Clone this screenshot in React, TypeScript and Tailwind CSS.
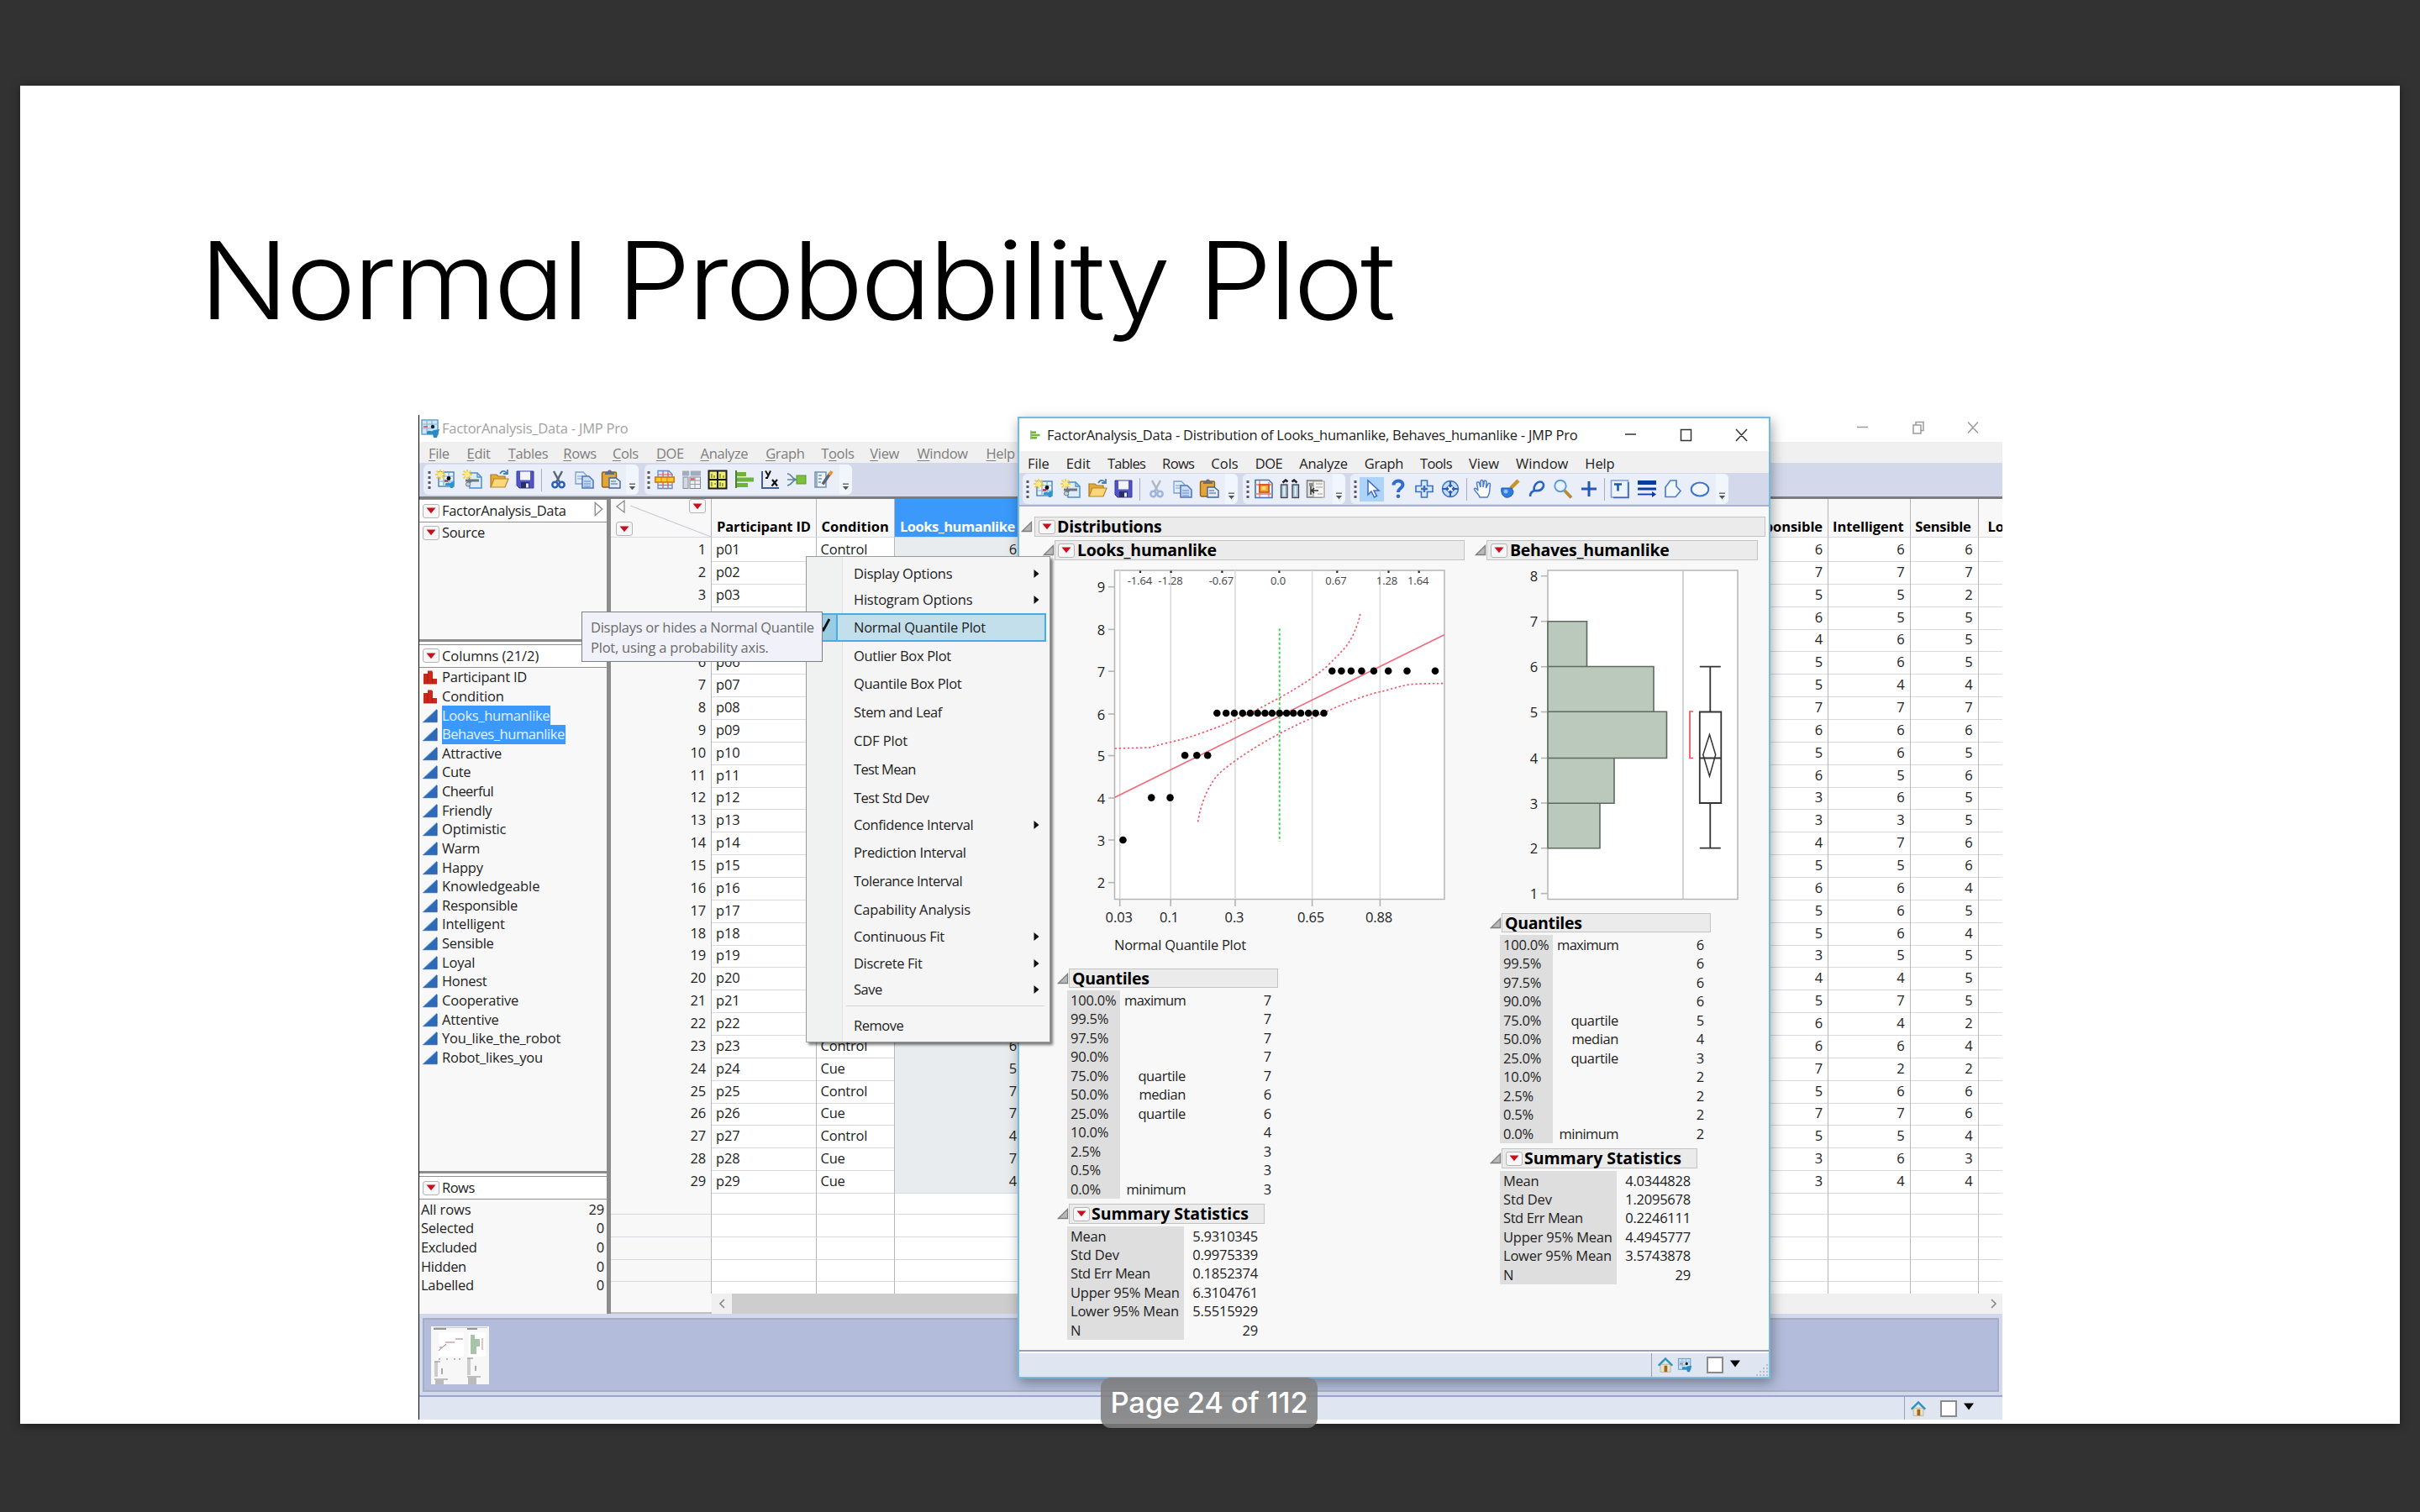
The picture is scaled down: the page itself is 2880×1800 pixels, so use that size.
import React, { useLayoutEffect, useRef, useState } from "react";

/** Text whose tracking is computed so that it spans exactly `w` pixels. */
function Fit({ w, children, className = "" }: { w: number; children: string; className?: string }) {
  const ref = useRef<HTMLSpanElement>(null);
  const [sp, setSp] = useState(0);
  useLayoutEffect(() => {
    const el = ref.current;
    if (!el) return;
    const prev = el.style.letterSpacing;
    el.style.letterSpacing = "0px";
    const natural = el.offsetWidth;
    el.style.letterSpacing = prev;
    setSp((w - natural) / children.length);
  }, [w, children]);
  return (
    <span ref={ref} className={"inline-block whitespace-pre " + className} style={{ letterSpacing: sp + "px" }}>
      {children}
    </span>
  );
}

/* ---------- small marks ---------- */

const RedTri = ({ className = "" }: { className?: string }) => (
  <span className={"flex h-[17px] w-[20px] shrink-0 items-center justify-center rounded-[3px] border-[1.5px] border-[#b4b4b4] bg-[#f7f7f7] " + className}>
    <svg width="12" height="8" viewBox="0 0 12 8"><path d="M0.5 0.5h11L6 7.2z" fill="#c8101c" /></svg>
  </span>
);

const Disclosure = () => (
  <svg className="shrink-0" width="14" height="14" viewBox="0 0 14 14">
    <path d="M1.5 12.5H12.5V1.5z" fill="#b9b9b9" stroke="#7d7d7d" strokeWidth="1.3" />
  </svg>
);

const Ordinal = () => (
  <svg width="18" height="18" viewBox="0 0 18 18">
    <path d="M1 5h5v12H1zM6 1.5h5.5V17H6zM11.500 11H17v6h-5.500z" fill="#d0261a" />
    <path d="M1 17h16M6 5v11M11.500 3v13" stroke="#9a1c12" strokeWidth="0.8" />
  </svg>
);

const Continuous = () => (
  <svg width="18" height="18" viewBox="0 0 18 18">
    <path d="M0.500 16.500L17 1v15.500z" fill="#2d6bb8" />
    <path d="M0.500 16.500L17 1" stroke="#7fb0e4" strokeWidth="1" />
    <path d="M0.500 16.700H17.200V2" stroke="#1f4f8e" strokeWidth="0.8" fill="none" />
  </svg>
);

const Dots = () => (
  <svg className="shrink-0" width="4" height="24" viewBox="0 0 4 24">
    {[2, 8, 14, 20].map((y) => <rect key={y} x="0.500" y={y} width="3" height="3" fill="#55585f" />)}
  </svg>
);

const Overflow = () => (
  <span className="flex w-[15px] shrink-0 items-end justify-center self-stretch rounded-r-md bg-[#f1f6fd] pb-[5px]">
    <svg width="9" height="9" viewBox="0 0 9 9"><path d="M1 1.200h7" stroke="#555" strokeWidth="1.300" /><path d="M0.800 4h7.400L4.500 8.200z" fill="#555" /></svg>
  </span>
);

/* ---------- toolbar drawings ---------- */

const Svg = ({ children, size = 24, className = "" }: { children: React.ReactNode; size?: number; className?: string }) => (
  <svg className={"shrink-0 " + className} width={size} height={size} viewBox="0 0 24 24" fill="none">{children}</svg>
);
const Spark = () => (
  <g>
    <path d="M6 0v12M0 6h12M1.500 1.500l9 9M10.500 1.500l-9 9" stroke="#f2cf4e" strokeWidth="1.800" />
    <circle cx="6" cy="6" r="3" fill="#ffe98a" />
  </g>
);
const NewTable = () => (
  <Svg>
    <rect x="4" y="3" width="18" height="17" fill="#eef6fd" stroke="#4b86c2" strokeWidth="1.500" />
    <path d="M4 8h18M4 14h18M10 3v17M16 3v17" stroke="#78a8d8" strokeWidth="1.200" />
    <path d="M11 12h4v3h-4z" fill="#cf4a58" /><circle cx="16" cy="10.500" r="2.400" fill="#111" />
    <path d="M12 17c2-3 4 1 7-2l4-1-2 8h-3l-1-3-5 0z" fill="#2a96cf" />
    <Spark />
  </Svg>
);
const NewScript = () => (
  <Svg>
    <path d="M8 4h10l5 5v13H9z" fill="#dcecfa" stroke="#4d8fc9" strokeWidth="1.500" />
    <path d="M18 4v5h5" stroke="#4d8fc9" strokeWidth="1.300" />
    <path d="M4 13h16M6 17l5-4" stroke="#6c7780" strokeWidth="3" /><circle cx="7" cy="17.500" r="2.600" fill="#c9d2d8" stroke="#6c7780" />
    <Spark />
  </Svg>
);
const Open = () => (
  <Svg>
    <path d="M2 21V6h7l2 2h8v4" fill="#e3ab3c" stroke="#ad7a1d" strokeWidth="1.200" />
    <path d="M2 21l4-10h17l-4 10z" fill="#fad77b" stroke="#b98524" strokeWidth="1.200" />
    <path d="M13 5c2-4 6-4 8-1M22 0v5h-5" stroke="#4a7fb5" strokeWidth="1.800" />
  </Svg>
);
const Save = () => (
  <Svg>
    <path d="M2 2h20v20H5l-3-3z" fill="#5054c4" stroke="#373a9a" strokeWidth="1" />
    <rect x="6" y="2.500" width="12" height="10" fill="#f3f5fd" /><rect x="7" y="15" width="10" height="7" fill="#2b2d66" />
    <rect x="13" y="16.500" width="3" height="5" fill="#e6e9f8" />
  </Svg>
);
const Cut = ({ faded = false }: { faded?: boolean }) => (
  <Svg className={faded ? "opacity-40" : ""}>
    <path d="M7 2l7 13M17 2l-7 13" stroke="#56677c" strokeWidth="2.500" />
    <circle cx="8.500" cy="18" r="3.200" stroke="#2f5fb5" strokeWidth="2.500" /><circle cx="16.500" cy="18" r="3.200" stroke="#2f5fb5" strokeWidth="2.500" />
  </Svg>
);
const Copy = () => (
  <Svg>
    <path d="M2 3h9l4 4v10H2z" fill="#e2ecfa" stroke="#7c9fd3" strokeWidth="1.300" /><path d="M4 8h7M4 11h7" stroke="#7c9fd3" />
    <path d="M10 8h8l5 5v9H10z" fill="#cadcf6" stroke="#4a74bd" strokeWidth="1.500" /><path d="M12 14h8M12 17h8M12 20h8" stroke="#5e87cb" />
  </Svg>
);
const Paste = () => (
  <Svg>
    <rect x="1.500" y="3" width="17" height="18" rx="1.500" fill="#e2a53a" stroke="#8f6117" strokeWidth="1.400" />
    <path d="M5 6V3h3a2.500 2.500 0 0 1 5 0h3v3z" fill="#6b6d72" />
    <path d="M10 10h8l5 4v8H10z" fill="#dfe9f7" stroke="#48638c" strokeWidth="1.400" /><path d="M12 14h6M12 17h8" stroke="#48638c" />
  </Svg>
);
const Band = () => (
  <Svg>
    <path d="M4 1.500h13l4 4v17H4z" fill="#dce9f8" stroke="#5f8fc6" strokeWidth="1.300" />
    <path d="M4 6h17M4 18.500h17M10 2v20M16 2v20" stroke="#d8575a" strokeWidth="1.200" />
    <rect x="0.800" y="9" width="22.400" height="6" fill="#ffc928" stroke="#d07a12" strokeWidth="1.600" /><path d="M8 9v6M15 9v6" stroke="#d07a12" />
  </Svg>
);
const Tabulate = () => (
  <Svg>
    <rect x="1" y="1.500" width="22" height="6" fill="#a3acba" /><rect x="2" y="9" width="6" height="13.500" fill="#d3d8df" stroke="#858e9b" />
    <rect x="10" y="9" width="12.500" height="13.500" fill="#eef0f3" stroke="#7f8794" /><path d="M10 13h12M10 17.500h12M16 9v13" stroke="#949ca8" />
    <rect x="11" y="10" width="4.500" height="3" fill="#de6e6a" /><path d="M10 0v8" stroke="#eef" strokeWidth="1.500" />
  </Svg>
);
const Quad = () => (
  <Svg>
    <rect x="1.500" y="1.500" width="21" height="21" fill="#f0ee6e" stroke="#1b1b1b" strokeWidth="2" /><path d="M12 1v22M1 12h22" stroke="#1b1b1b" strokeWidth="2" />
    <path d="M5 5v5M8 7v3M15 5v5M19 7v3M5 15v5M8 17h2M15 15v5M18 16v4" stroke="#7e8c2e" strokeWidth="1.500" />
  </Svg>
);
const Bars = ({ size = 24 }: { size?: number }) => (
  <Svg size={size}>
    <path d="M2 1v21" stroke="#4d7d2f" strokeWidth="2" /><path d="M3 3h11v5H3zM3 9.500h20v5H3zM3 16h13v5H3z" fill="#6fb23c" />
  </Svg>
);
const YbyX = () => (
  <Svg>
    <path d="M2 2v20h20" stroke="#3f5f90" strokeWidth="2" />
    <path d="M6 1.500l3 5M12 1.500L8 10H6" stroke="#111" strokeWidth="1.900" /><path d="M14 12l6 7.500M20 12l-6.500 7.500" stroke="#111" strokeWidth="2.200" />
  </Svg>
);
const Fan = () => (
  <Svg>
    <path d="M1 5c5 0 6 7 11 7M1 12h11M1 19c5 0 6-7 11-7" stroke="#5f82a3" strokeWidth="1.600" /><rect x="12" y="7" width="11" height="10" fill="#7bbf3d" stroke="#5a9a28" />
  </Svg>
);
const EditPage = () => (
  <Svg>
    <path d="M2 3h13v18H2z" fill="#eef3f8" stroke="#7292b3" strokeWidth="1.500" /><path d="M6 7h4M6 11h4M6 15h3M4 3v18" stroke="#7292b3" strokeWidth="1.400" />
    <path d="M20 4.500L11 17.500" stroke="#5b6470" strokeWidth="3.600" /><path d="M22 2l-3 4.500" stroke="#e8963a" strokeWidth="4" />
  </Svg>
);
const GridSel = () => (
  <Svg>
    <path d="M2 1.500h16l4 4v17H2z" fill="#eef5fd" stroke="#4272b4" strokeWidth="1.600" /><path d="M2 7h20M2 18h20M7 2v20M18 4v18" stroke="#dd7a7c" strokeWidth="1.300" />
    <rect x="7" y="7" width="11" height="9" fill="#f7a72b" stroke="#cf4f10" strokeWidth="1.600" /><rect x="9.500" y="9" width="5" height="4" fill="#f9d884" />
  </Svg>
);
const Binoc = () => (
  <Svg>
    <path d="M3.500 4.500l3.500-3 2.500 2M14.500 3.500l2.500-2 3.500 3" stroke="#222" strokeWidth="2.400" />
    <rect x="1.500" y="7" width="7.500" height="15.500" fill="#a9c4d2" stroke="#39434a" strokeWidth="1.300" /><rect x="15" y="7" width="7.500" height="15.500" fill="#a9c4d2" stroke="#39434a" strokeWidth="1.300" />
    <path d="M5.200 8.500v12M18.700 8.500v12" stroke="#e4f0f6" strokeWidth="2" />
  </Svg>
);
const Journal = () => (
  <Svg>
    <path d="M1.500 2H19v20H1.500z" fill="#dfe0e0" stroke="#777" strokeWidth="1.400" /><path d="M4 5h5v4H4z" fill="#8c8c8c" />
    <path d="M9 3h13v19H9z" fill="#f6f6f4" stroke="#a29a8a" strokeWidth="1.200" /><path d="M12 6h8M12 10h8M14 18h6" stroke="#b9b9b9" strokeWidth="1.300" /><path d="M6 9v10M6 14h9M10 11l-3 3 3 3" stroke="#333" strokeWidth="1.500" />
  </Svg>
);
const Pointer = () => <Svg><path d="M7 2v17l4-4 3.500 7 3-1.500L14 14h6z" fill="#fff" stroke="#4169c4" strokeWidth="1.500" /></Svg>;
const Question = () => (
  <Svg><path d="M6.500 7.500C6.500 1 17.500 1 17.500 7c0 4.500-5.500 4-5.500 9" stroke="#2d6cd0" strokeWidth="4" /><circle cx="12" cy="20.800" r="2.300" fill="#2d6cd0" /></Svg>
);
const Cross = () => (
  <Svg><path d="M8.500 2h7v6.500H22v7h-6.500V22h-7v-6.500H2v-7h6.500z" fill="#dcebfb" stroke="#3a6fc4" strokeWidth="1.600" /><path d="M12 8v8M8 12h8" stroke="#3a6fc4" strokeWidth="2.500" /></Svg>
);
const Globe = () => (
  <Svg><circle cx="12" cy="12" r="9.500" fill="#c7dcf6" stroke="#3a6fc4" strokeWidth="1.500" /><path d="M12 3v18M3 12h18" stroke="#2f5fb5" strokeWidth="2" /><path d="M12 5l3 4H9zM12 19l3-4H9zM5 12l4-3v6zM19 12l-4-3v6z" fill="#2f5fb5" /><circle cx="12" cy="12" r="2" fill="#fff" /></Svg>
);
const Hand = () => (
  <Svg><path d="M8 22c-1-4-7-8-6.500-10 1-1.500 3 0 4.500 2L4.500 5c.5-2 2.500-1.500 3 0L9 10V3c.5-2 2.500-2 3 0v7l1.500-7c.7-1.500 2.500-1 2.500.7L15.500 11l2.500-5c1-1.300 2.800-.5 2.500 1-1 4 .5 10-3.500 15z" fill="#fff" stroke="#4a7ccc" strokeWidth="1.500" /></Svg>
);
const Brush = () => (
  <Svg><path d="M22 2l-9 9" stroke="#c8932b" strokeWidth="4.500" /><path d="M2 11l12 0 2 4c0 5-5 8-9 7-4-1-6-6-5-11z" fill="#2f7be0" stroke="#1e59b4" /><circle cx="7" cy="15" r="2.500" fill="#8fc0fa" /></Svg>
);
const Lasso = () => (
  <Svg><path d="M9 15C7 8 13 2 18 4c5 3 0 11-6 10-4 0-8 1-8 7" stroke="#2c62c0" strokeWidth="2.600" /></Svg>
);
const Magnifier = () => (
  <Svg><circle cx="9" cy="8.500" r="6.700" fill="#e8f3fd" stroke="#5a9be0" strokeWidth="2" /><path d="M14 14l8 8.500" stroke="#b98a35" strokeWidth="4" /></Svg>
);
const Plus = () => <Svg><path d="M12 3v18M3 12h18" stroke="#2358b8" strokeWidth="3" /></Svg>;
const TextTool = () => (
  <Svg><rect x="1.500" y="2" width="20" height="20" fill="#edf4fd" stroke="#7fa3d6" strokeWidth="1.600" /><path d="M22 4v18.500H4" stroke="#3f66a8" strokeWidth="1.600" /><path d="M5 6.500h9M9.500 6.500v8" stroke="#1f56b0" strokeWidth="2.600" /></Svg>
);
const Lines = () => (
  <Svg><path d="M1 4.500h22" stroke="#0b3b9c" strokeWidth="5" /><path d="M1 12h22" stroke="#0b3b9c" strokeWidth="3" /><path d="M1 18.500h19" stroke="#0b3b9c" strokeWidth="1.800" /><path d="M18 15l5 3.500-5 3.500z" fill="#0b3b9c" /></Svg>
);
const Poly = () => <Svg><path d="M3 21.500V10l6-8h7v7l5 5.500-6 7z" fill="#f2f7fe" stroke="#4a7fd0" strokeWidth="1.700" /></Svg>;
const Oval = () => <Svg><ellipse cx="12" cy="12.500" rx="10.300" ry="8" fill="#f2f7fe" stroke="#3f74cc" strokeWidth="2" /></Svg>;
const House = () => (
  <Svg size={18}><path d="M4 11h16v12H4z" fill="#e9e4d0" stroke="#b2a678" /><path d="M1 13L12 2l11 11" stroke="#2b93c4" strokeWidth="3.200" /><rect x="10" y="13" width="5" height="10" fill="#a7651c" /></Svg>
);
const TableMark = ({ size = 18 }: { size?: number }) => (
  <Svg size={size}>
    <rect x="2" y="2" width="19" height="17" fill="#cfe5f4" stroke="#6ba6cf" strokeWidth="1.600" /><path d="M2 7h19M2 12h12M8 2v17M14 2v10" stroke="#8bb5da" strokeWidth="1.200" />
    <path d="M4 9h5v2H4z" fill="#d26a70" /><circle cx="15" cy="10" r="2.200" fill="#123" /><path d="M8 16c3-3 5 1 8-2l7-1-3 10h-4l-1-4-7 0z" fill="#2b8cc4" />
  </Svg>
);

const Sep = ({ className = "" }: { className?: string }) => <span className={"h-[27px] w-px shrink-0 bg-[#a9afbf] " + className} />;
const FileIcons = ({ faded = false }: { faded?: boolean }) => (
  <>
    <Dots /><span className="w-[5px]" />
    <NewTable /><span className="w-2" /><NewScript /><span className="w-2" /><Open /><span className="w-[7px]" /><Save />
    <Sep className="mx-[7px]" />
    <Cut faded={faded} /><span className="w-[7px]" /><Copy /><span className="w-2" /><Paste />
  </>
);

/* ---------- menus ---------- */

const MENUS: [string, number, number][] = [
  ["File", 0, 25.5], ["Edit", 0, 29], ["Tables", 0, 45.5], ["Rows", 0, 38.5], ["Cols", 0, 32], ["DOE", 0, 32.500],
  ["Analyze", 0, 57.500], ["Graph", 0, 46], ["Tools", 1, 38], ["View", 0, 36], ["Window", 0, 62], ["Help", 0, 35.5],
];

const MenuBar = ({ underline }: { underline: boolean }) => (
  <>
    {MENUS.map(([m, k, w]) => (
      <span key={m} className="flex shrink-0">
        {underline ? (
          <span className="tracking-[-0.35px] whitespace-pre" style={{ width: w }}>
            {m.slice(0, k)}<span className="underline decoration-1 underline-offset-2">{m[k]}</span>{m.slice(k + 1)}
          </span>
        ) : (
          <Fit w={w}>{m}</Fit>
        )}
      </span>
    ))}
  </>
);

/* ---------- data ---------- */

const COLUMNS: [string, number][] = [
  ["Participant ID", 101], ["Condition", 74], ["Looks_humanlike", 128], ["Behaves_humanlike", 146], ["Attractive", 71.500], ["Cute", 34.500],
  ["Cheerful", 61.500], ["Friendly", 59], ["Optimistic", 76], ["Warm", 44.500], ["Happy", 49], ["Knowledgeable", 116], ["Responsible", 90],
  ["Intelligent", 75], ["Sensible", 61.500], ["Loyal", 39], ["Honest", 53], ["Cooperative", 91], ["Attentive", 67.500], ["You_like_the_robot", 141], ["Robot_likes_you", 120],
];

const CONDITION: Record<number, string> = { 1: "Control", 23: "Control", 24: "Cue", 25: "Control", 26: "Cue", 27: "Control", 28: "Cue", 29: "Cue" };
const LOOKS: Record<number, number> = { 1: 6, 23: 6, 24: 5, 25: 7, 26: 7, 27: 4, 28: 7, 29: 4 };
const RATINGS = "666 777 552 655 465 565 544 777 666 565 656 365 335 476 556 664 565 564 355 445 575 642 664 722 566 776 554 363 344".split(" ");

const GRID = "grid grid-cols-[120px_124.5px_93.5px_148px_867px_96px_97.5px_81px_29px]";
const CELL = "border-b-[1.5px] border-r-[1.5px] border-b-[#d9d9e4] border-r-[#b5b5ba]";

const SideHeader = ({ label, w, arrow = false }: { label: string; w: number; arrow?: boolean }) => (
  <div className="flex h-[28px] shrink-0 items-center border-y-[1.5px] border-[#909090] bg-white pl-1">
    <RedTri /><Fit w={w} className="ml-[3px]">{label}</Fit>
    {arrow && <svg className="mr-1 ml-auto -mt-1" width="11" height="18" viewBox="0 0 11 18"><path d="M1.200 1.500v15L9.800 9z" fill="#fff" stroke="#888" strokeWidth="1.300" /></svg>}
  </div>
);

const Thumb = () => (
  <svg className="mt-2 ml-[8px]" width="69" height="69" viewBox="0 0 69 69">
    <rect width="69" height="69" fill="#f7f7f7" /><path d="M3 3h15M43 3h12" stroke="#777" strokeWidth="1.300" /><path d="M3 1.500h64" stroke="#ccc" />
    <rect x="9" y="7" width="30" height="29" fill="#fff" /><rect x="45" y="7" width="20" height="29" fill="#fff" />
    <path d="M9 29l9-8M17 19h11M29 15h9M10 25l3 0" stroke="#a8767c" strokeWidth="1" /><path d="M47 10h5v5h6v9h-4v9h-7z" fill="#a9c3a9" /><path d="M61 14v14" stroke="#b88" />
    <path d="M9 39h2M18 39h2M27 39h2M33 39h2" stroke="#777" />
    <rect x="4" y="42" width="4" height="18" fill="#ccc" /><rect x="43" y="38" width="4" height="20" fill="#ccc" /><path d="M4 42h7M43 38h7M4 63h16M43 60h16" stroke="#888" strokeWidth="1.200" />
    <path d="M13 50v7M53 47v6" stroke="#aaa" strokeWidth="2" /><rect x="5" y="64" width="10" height="5" fill="#bbb" /><rect x="44" y="61" width="10" height="8" fill="#bbb" />
  </svg>
);

const StatusTools = ({ table = false }: { table?: boolean }) => (
  <>
    <span className="h-full w-[1.5px] bg-[#9aa0b2]" />
    <span className="ml-[7px] flex"><House /></span>
    {table && <span className="ml-[5px] flex"><TableMark /></span>}
    <span className="ml-[17px] h-[20px] w-[20px] border-2 border-[#8b8b8b] bg-white" />
    <svg className="ml-2 mb-1" width="12" height="9" viewBox="0 0 12 9"><path d="M0 0.500h12L6 8.500z" fill="#000" /></svg>
  </>
);

/* ---------- data-table window ---------- */

function DataWindow() {
  return (
    <div className="absolute top-[494px] left-[498px] flex h-[1196px] w-[1885px] flex-col overflow-hidden border-l border-black bg-white">
      <div className="flex h-[32px] shrink-0 items-center pl-px">
        <TableMark size={24} />
        <Fit w={222} className="ml-[2px] text-[#a2a2a2]">FactorAnalysis_Data - JMP Pro</Fit>
        <svg className="mr-[25px] ml-auto" width="150" height="18" viewBox="0 0 150 18" fill="none" stroke="#9b9b9b" strokeWidth="1.500">
          <path d="M2 7.500h13M69 5h9v10h-9zM72 5V1.500h9V11.500h-3M134 1.500l12 13M146 1.500l-12 13" />
        </svg>
      </div>
      <div className="flex h-[25px] shrink-0 items-center gap-[20.100px] bg-[#f0f0f0] pt-[3px] pl-[11px] text-[#7e7e7e]"><MenuBar underline /></div>
      <div className="flex h-[40px] shrink-0 gap-[7px] bg-[#d3d9eb] pt-[2px] pb-[2px] pl-[5px]">
        <div className="flex w-[256px] items-center rounded-md bg-[#eaeef9] pl-[5px]"><FileIcons /><span className="ml-auto flex self-stretch"><Overflow /></span></div>
        <div className="flex w-[247px] items-center rounded-md bg-[#eaeef9] pl-[3px]">
          <Dots /><span className="w-[5px]" /><Band /><span className="w-2" /><Tabulate /><span className="w-[7px]" /><Quad /><span className="w-2" /><Bars /><span className="w-[7px]" /><YbyX /><span className="w-[7px]" /><Fan /><span className="w-2" /><EditPage />
          <span className="ml-auto flex self-stretch"><Overflow /></span>
        </div>
      </div>
      <div className="h-[3px] shrink-0 bg-[#7c7c7c]" />
      <div className="flex h-[970px] shrink-0">
        <div className="flex w-[223px] shrink-0 flex-col bg-[#f8f8f8]">
          <SideHeader label="FactorAnalysis_Data" w={148} arrow />
          <div className="flex items-center pt-[1px] pl-1"><RedTri /><Fit w={51} className="ml-[3px]">Source</Fit></div>
          <div className="mt-auto h-[3px] shrink-0 bg-[#8c8c8c]" />
          <div className="h-[3px] shrink-0 bg-white" />
          <SideHeader label="Columns (21/2)" w={115} />
          <ul className="flex h-[599.500px] shrink-0 flex-col pt-[0.500px]">
            {COLUMNS.map(([c, w], i) => (
              <li key={c} className="flex h-[22.630px] shrink-0 items-center pl-1">
                {i < 2 ? <Ordinal /> : <Continuous />}
                <span className={i === 2 || i === 3 ? "ml-[5px] flex h-full items-center bg-[#3b99fc] pr-px text-[#e6f2ff]" : "ml-[5px] flex items-center"}><Fit w={w}>{c}</Fit></span>
              </li>
            ))}
          </ul>
          <div className="h-[3px] shrink-0 bg-[#8c8c8c]" />
          <div className="h-[3px] shrink-0 bg-white" />
          <SideHeader label="Rows" w={39} />
          <div className="h-[136px] shrink-0 pt-[0.500px] pr-[3px] pl-[2px]">
            {([["All rows", 59, "29"], ["Selected", 63, "0"], ["Excluded", 66, "0"], ["Hidden", 54, "0"], ["Labelled", 63, "0"]] as [string, number, string][]).map(([a, w, b]) => (
              <div key={a} className="flex h-[22.600px] items-center justify-between"><Fit w={w}>{a}</Fit><span>{b}</span></div>
            ))}
          </div>
        </div>
        <div className="w-[5px] shrink-0 bg-[#8c8c8c]" />
        <div className="flex grow flex-col">
          <div className={GRID + " h-[46px] shrink-0 bg-[#f8f8f8] font-bold text-black"}>
            <div className={CELL + " flex flex-col justify-between border-b-[#b5b5b5] pb-px pl-[6px]"}>
              <div className="flex items-start justify-between pr-[6px]">
                <svg width="86" height="40" viewBox="0 0 86 40" className="-mb-6 shrink-0 overflow-visible"><path d="M10 2v14L1 9z" fill="#fff" stroke="#8a8a8a" strokeWidth="1.300" /><path d="M17 8l96 37" stroke="#cbcbd6" strokeWidth="1.300" /></svg>
                <RedTri />
              </div>
              <RedTri />
            </div>
            <div className={CELL + " flex items-end pb-[1px] pl-[6px]"}><Fit w={112}>Participant ID</Fit></div>
            <div className={CELL + " flex items-end pb-[1px] pl-[6px]"}><Fit w={80}>Condition</Fit></div>
            <div className={CELL + " flex items-end bg-[#3b99fc] pb-[1px] pl-[6px] text-white"}><Fit w={137}>Looks_humanlike</Fit></div>
            <div className={CELL} />
            <div className={CELL + " flex items-end justify-end pr-[6px] pb-[1px]"}><Fit w={98}>Responsible</Fit></div>
            <div className={CELL + " flex items-end justify-end pr-[7px] pb-[1px]"}><Fit w={84}>Intelligent</Fit></div>
            <div className={CELL + " flex items-end justify-end pr-[8px] pb-[1px]"}><Fit w={66}>Sensible</Fit></div>
            <div className={CELL + " flex items-end overflow-hidden border-r-0 pb-[1px] pl-[11px]"}><Fit w={44}>Loyal</Fit></div>
          </div>
          <div className="h-[900px] shrink-0 overflow-hidden">
            {Array.from({ length: 34 }, (_, i) => i + 1).map((n) => {
              const r = n < 30 ? RATINGS[n - 1] : "   ";
              return (
                <div key={n} className={GRID + " h-[26.870px] leading-[28px]"}>
                  <div className={CELL + " border-b-2 border-b-[#bdbdbd] bg-[#f8f8f8] pr-[6px] text-right"}>{n < 30 ? n : ""}</div>
                  <div className={CELL + " pl-[5px]"}>{n < 30 ? "p" + String(n).padStart(2, "0") : ""}</div>
                  <div className={CELL + " pl-[5px]"}>{CONDITION[n] ?? ""}</div>
                  <div className={CELL + (n < 30 ? " bg-[#e8ecef] pr-[2px] text-right" : "")}>{LOOKS[n] ?? ""}</div>
                  <div className={CELL} />
                  <div className={CELL + " pr-[6px] text-right"}>{r[0]}</div>
                  <div className={CELL + " pr-[6px] text-right"}>{r[1]}</div>
                  <div className={CELL + " pr-[6px] text-right"}>{r[2]}</div>
                  <div className={CELL + " border-r-0"} />
                </div>
              );
            })}
          </div>
          <div className="flex h-[24px] shrink-0">
            <div className="w-[120px] border-b-2 border-[#c0c0c0] bg-[#f8f8f8]" />
            <div className="flex grow items-center bg-[#f0f0f0]">
              <svg className="mx-[8px]" width="8" height="12" viewBox="0 0 8 12" fill="none" stroke="#888" strokeWidth="1.700"><path d="M7 1L2 6l5 5" /></svg>
              <div className="h-full w-[900px] bg-[#cdcdcd]" />
              <svg className="mr-[7px] ml-auto" width="8" height="12" viewBox="0 0 8 12" fill="none" stroke="#888" strokeWidth="1.700"><path d="M1 1l5 5-5 5" /></svg>
            </div>
          </div>
        </div>
      </div>
      <div className="h-[97px] shrink-0 bg-[#d3d9ec] px-1 pt-[5px] pb-[4px]">
        <div className="h-full border-2 border-[#a7adc2] bg-[#b3bddb]"><Thumb /></div>
      </div>
      <div className="flex grow items-center justify-end border-t-2 border-[#9aa4cc] bg-[#dfe6f1] pr-[34px]"><StatusTools /></div>
    </div>
  );
}

/* ---------- charts ---------- */

const Y1: [number, number][] = [[9, 698.7], [8, 749.3], [7, 799.2], [6, 850], [5, 899.600], [4, 950], [3, 1000], [2, 1050.700]];
const POINTS: [number, number[]][] = [
  [1000, [374]], [949.600, [474, 540]], [899.300, [592, 634, 672]],
  [849, [705, 737, 766, 795, 822, 848, 874, 899, 925, 950, 974, 1000, 1027, 1052, 1081]],
  [798.800, [1110, 1143, 1177, 1214, 1257, 1308, 1374, 1473]],
];

const QuantilePlot = () => (
  <svg className="block" width="502" height="473" viewBox="1241 667 502 473" fontSize="16.500" fill="#222" letterSpacing="-0.1">
    <rect x="1326.500" y="679" width="392.500" height="391.500" fill="#fff" stroke="#b5b5b5" strokeWidth="1.500" />
    {[1332.700, 1393.200, 1470, 1561.600, 1642.400].map((x) => <path key={x} d={`M${x} 679V1070`} stroke="#dadada" strokeWidth="1.600" />)}
    {[1332.700, 1393.200, 1470, 1561.600, 1642.400].map((x) => <path key={x} d={`M${x} 1071v8`} stroke="#b5b5b5" strokeWidth="1.600" />)}
    {Y1.map(([n, y]) => <g key={n}><path d={`M1319 ${y}h7.500`} stroke="#b5b5b5" strokeWidth="1.600" /><text x="1315" y={y + 6.500} textAnchor="end">{n}</text></g>)}
    {([[1357, "-1.64", 1356.400], [1393.600, "-1.28", 1393], [1454.400, "-0.67", 1453.400], [1522.400, "0.0", 1521], [1591.300, "0.67", 1590], [1652.500, "1.28", 1650.500], [1688.700, "1.64", 1687.700]] as [number, string, number][]).map(([x, t, c]) => (
      <g key={t}><path d={`M${x} 679.500v2.500`} stroke="#222" strokeWidth="2.200" /><text x={c} y="696" fontSize="13" letterSpacing="-0.1" fill="#444" textAnchor="middle">{t}</text></g>
    ))}
    {([["0.03", 1331.700], ["0.1", 1391.500], ["0.3", 1469], ["0.65", 1560], ["0.88", 1641]] as [string, number][]).map(([t, x]) => <text key={t} x={x} y="1097.500" textAnchor="middle">{t}</text>)}
    <g transform="translate(1210 640) scale(0.33807 0.33333)" fill="none" stroke="#f3697a" strokeWidth="5">
      <path d="M345 928L1505 347" />
      <g stroke="#f1505f" strokeDasharray="7 8" strokeWidth="4.800">
        <path d="M345 753L465 750C480 748 500 740 530 733C600 718 660 695 720 672C800 638 860 608 925 572C1000 530 1050 497 1095 457C1140 410 1165 390 1185 345C1200 310 1207 290 1210 265" />
        <path d="M638 1015C645 970 660 920 685 880C700 850 730 825 765 800C820 760 870 730 925 700C990 665 1050 640 1110 612C1160 590 1210 570 1260 555C1310 545 1340 532 1385 524C1420 522 1460 521 1500 521" />
      </g>
      <path d="M925 325V1085" stroke="#4bcf5a" strokeWidth="6" strokeDasharray="8.500 8" />
    </g>
    {POINTS.map(([y, xs]) => xs.map((x) => <circle key={x} cx={1210 + x / 2.958} cy={y} r="4.300" fill="#000" />))}
    <text x="1326" y="1131" textLength="157" lengthAdjust="spacing">Normal Quantile Plot</text>
  </svg>
);

const Histogram = () => (
  <svg className="block" width="340" height="405" viewBox="1755 667 340 405" fontSize="16.500" fill="#222">
    <rect x="1842" y="679" width="226" height="391.500" fill="#fff" stroke="#b5b5b5" strokeWidth="1.500" />
    <path d="M2003 679v391" stroke="#c4c4c4" strokeWidth="1.500" />
    {([[8, 685.700], [7, 739.700], [6, 793.700], [5, 847.500], [4, 902.500], [3, 956], [2, 1009.700], [1, 1063.700]] as [number, number][]).map(([n, y]) => (
      <g key={n}><path d={`M1834 ${y}h7.500`} stroke="#b5b5b5" strokeWidth="1.600" /><text x="1830" y={y + 6.500} textAnchor="end">{n}</text></g>
    ))}
    <g fill="#bac9bb" stroke="#5d6b5e" strokeWidth="1.600">
      <path d="M1842 739.700h46.500v53.800h-46.500zM1842 793.500h126v53.800h-126zM1842 847.300h141.500v55.200h-141.500zM1842 902.500h79v53.800h-79zM1842 956.300h62v53.400h-62z" />
    </g>
    <path d="M2015 847h-4v55.500h4" fill="none" stroke="#f0505e" strokeWidth="1.700" />
    <g fill="none" stroke="#333" strokeWidth="1.800">
      <path d="M2022.800 793.700h25M2035.300 793.700v53.500M2022.800 847.500h25.500v108.500h-25.500zM2022.800 902.500h25.500M2035.300 956v53.700M2022.800 1009.700h25" />
      <path d="M2034.500 874.500l7.200 24-7.200 25.500-7.700-25.500z" strokeWidth="1.500" />
    </g>
  </svg>
);

/* ---------- report tables ---------- */

const HEAD = "flex items-center border-[1.5px] border-[#c3c3c3] bg-[#ebebeb] font-bold text-[19.500px] text-black";
const QLABELS: [string, string, number][] = [["100.0%", "maximum", 73], ["99.5%", "", 0], ["97.5%", "", 0], ["90.0%", "", 0], ["75.0%", "quartile", 57], ["50.0%", "median", 55.500], ["25.0%", "quartile", 57], ["10.0%", "", 0], ["2.5%", "", 0], ["0.5%", "", 0], ["0.0%", "minimum", 70]];
const SLABELS: [string, number][] = [["Mean", 42], ["Std Dev", 58], ["Std Err Mean", 95], ["Upper 95% Mean", 130], ["Lower 95% Mean", 129], ["N", 13]];

const Stats = ({ q, s }: { q: string; s: string[] }) => (
  <div className="flex flex-col">
    <div className="flex items-center"><Disclosure /><div className={HEAD + " h-[23px] w-[249px] pl-[3px]"}><Fit w={92}>Quantiles</Fit></div></div>
    <div className="mt-[3.500px] ml-[12px]">
      {QLABELS.map(([a, b, w], i) => (
        <div key={a} className="flex h-[22.500px] items-center">
          <span className="flex h-[23px] w-[63px] items-center bg-[#dedede] pl-1">{a}</span>
          <span className="flex w-[78px] justify-end">{b && <Fit w={w}>{b}</Fit>}</span>
          <span className="w-[102px] text-right">{q[i]}</span>
        </div>
      ))}
    </div>
    <div className="mt-[6px] flex items-center"><Disclosure /><div className={HEAD + " h-[24px] w-[233px] pl-[4px]"}><RedTri /><Fit w={187} className="ml-[2px]">Summary Statistics</Fit></div></div>
    <div className="mt-[3.500px] ml-[12px]">
      {SLABELS.map(([a, w], i) => (
        <div key={a} className="flex h-[22.400px] items-center">
          <span className="flex h-[23px] w-[139px] items-center bg-[#dedede] pl-1"><Fit w={w}>{a}</Fit></span>
          <span className="flex w-[88px] justify-end">{i < 5 ? <Fit w={78}>{s[i]}</Fit> : s[i]}</span>
        </div>
      ))}
    </div>
  </div>
);

function ReportWindow() {
  return (
    <div className="absolute top-[496px] left-[1211px] flex h-[1145px] w-[896px] flex-col border-2 border-[#74bbe2] bg-[#f8f8f8] shadow-[2px_5px_14px_rgba(0,0,0,0.35)]">
      <div className="flex h-[39px] shrink-0 items-center bg-white pl-[13px] text-[#222]">
        <Bars size={12} />
        <Fit w={631} className="ml-[8px]">FactorAnalysis_Data - Distribution of Looks_humanlike, Behaves_humanlike - JMP Pro</Fit>
        <svg className="mr-[24px] ml-auto" width="148" height="18" viewBox="0 0 148 18" fill="none" stroke="#333" strokeWidth="1.500"><path d="M1 8h13M67.500 2.500h12v13h-12zM133 2l13 14M146 2l-13 14" /></svg>
      </div>
      <div className="flex h-[26px] shrink-0 items-center gap-[20px] bg-[#f0f0f0] pt-1 pl-[10px] text-[#222]"><MenuBar underline={false} /></div>
      <div className="flex h-[40px] shrink-0 gap-[6px] border-b-2 border-[#a9b1d8] bg-[#d3d9eb] py-[1px] pl-[4px]">
        <div className="flex w-[256px] items-center rounded-md bg-[#eaeef9] pl-[4px]"><FileIcons faded /><span className="ml-auto flex self-stretch"><Overflow /></span></div>
        <div className="flex w-[122px] items-center rounded-md bg-[#eaeef9] pl-[4px]">
          <Dots /><span className="w-[5px]" /><GridSel /><span className="w-[7px]" /><Binoc /><span className="w-[7px]" /><Journal /><span className="ml-auto flex self-stretch"><Overflow /></span>
        </div>
        <div className="flex w-[450px] items-center rounded-md bg-[#eaeef9] pl-[4px]">
          <Dots /><span className="ml-[3px] flex h-[29px] w-[29px] items-center justify-center bg-[#acd3f8]"><Pointer /></span>
          <span className="w-[5px]" /><Question /><span className="w-[7px]" /><Cross /><span className="w-[7px]" /><Globe />
          <Sep className="mx-[7px]" /><Hand /><span className="w-2" /><Brush /><span className="w-2" /><Lasso /><span className="w-[7px]" /><Magnifier /><span className="w-[7px]" /><Plus />
          <Sep className="mx-[6px]" /><TextTool /><span className="w-2" /><Lines /><span className="w-[7px]" /><Poly /><span className="w-2" /><Oval />
          <span className="ml-auto flex self-stretch"><Overflow /></span>
        </div>
      </div>
      <div className="flex h-[1006px] shrink-0 flex-col border-b-2 border-[#9c9fb8] pt-[12px]">
        <div className="flex items-center gap-[2px] pl-[2px]"><Disclosure /><div className={HEAD + " h-[24px] w-[870px] pl-[4px]"}><RedTri /><Fit w={125} className="ml-[2px]">Distributions</Fit></div></div>
        <div className="mt-[4px] flex">
          <div className="ml-[28px] w-[502px]">
            <div className="flex items-center"><Disclosure /><div className={HEAD + " h-[24px] w-[488px] pl-[3px]"}><RedTri /><Fit w={166} className="ml-[3px]">Looks_humanlike</Fit></div></div>
            <QuantilePlot />
            <div className="mt-[13px] ml-[17px]"><Stats q="77777664333" s={["5.9310345", "0.9975339", "0.1852374", "6.3104761", "5.5515929", "29"]} /></div>
          </div>
          <div className="ml-[12px]">
            <div className="flex items-center"><Disclosure /><div className={HEAD + " h-[24px] w-[323px] pl-[4px]"}><RedTri /><Fit w={189} className="ml-[3px]">Behaves_humanlike</Fit></div></div>
            <Histogram />
            <div className="mt-[15px] ml-[18px]"><Stats q="66665432222" s={["4.0344828", "1.2095678", "0.2246111", "4.4945777", "3.5743878", "29"]} /></div>
          </div>
        </div>
      </div>
      <div className="relative flex grow items-center justify-end border-t-2 border-white bg-[#dfe6f1] pr-[34px]">
        <StatusTools table />
        <svg className="absolute right-0 bottom-0" width="16" height="16" viewBox="0 0 16 16" fill="#b5bccb">
          {[[13, 1], [9, 5], [13, 5], [5, 9], [9, 9], [13, 9], [1, 13], [5, 13], [9, 13], [13, 13]].map(([x, y]) => <rect key={x + "-" + y} x={x} y={y} width="2" height="2" />)}
        </svg>
      </div>
    </div>
  );
}

/* ---------- context menu ---------- */

const ITEMS: [string, number, boolean][] = [
  ["Display Options", 117.500, true], ["Histogram Options", 141, true], ["Normal Quantile Plot", 157, false], ["Outlier Box Plot", 116, false], ["Quantile Box Plot", 128, false],
  ["Stem and Leaf", 105, false], ["CDF Plot", 64, false], ["Test Mean", 74, false], ["Test Std Dev", 89, false], ["Confidence Interval", 142, true], ["Prediction Interval", 134, false],
  ["Tolerance Interval", 129, false], ["Capability Analysis", 139, false], ["Continuous Fit", 107.500, true], ["Discrete Fit", 81.500, true], ["Save", 34, true],
];

const ContextMenu = () => (
  <div className="absolute top-[662px] left-[959px] flex h-[579px] w-[291px] flex-col border-[1.5px] border-[#9a9a9a] bg-[#f5f5f5] bg-[linear-gradient(to_right,#f0f1f1_42px,#dfe0e0_42px,#dfe0e0_43.5px,#f5f5f5_43.5px)] pt-[4px] text-[#222] shadow-[3px_3px_3px_rgba(0,0,0,0.5)]">
    {ITEMS.map(([t, w, sub]) => {
      const on = t === "Normal Quantile Plot";
      return (
        <div key={t} className={(sub ? "h-[31.400px]" : "h-[33.850px]") + " mr-[4px] flex shrink-0 items-center" + (on ? " border-2 border-[#45aee0] bg-[#c4dfec]" : " border-2 border-transparent")}>
          {on ? (
            <span className="flex h-full w-[35px] items-center justify-end border-r-2 border-[#45aee0] bg-[#9acce4] pr-[6px]">
              <svg className="-mt-1 shrink-0" width="14" height="18" viewBox="0 0 14 18" fill="none" stroke="#111" strokeWidth="2.800"><path d="M2 10l3 4L12 1" /></svg>
            </span>
          ) : <span className="w-[35px]" />}
          <span className="ml-[19px]"><Fit w={w}>{t}</Fit></span>
          {sub && <svg className="mr-[6px] ml-auto" width="7" height="10" viewBox="0 0 7 10"><path d="M0.500 0L6.500 5l-6 5z" fill="#111" /></svg>}
        </div>
      );
    })}
    <div className="mt-[3px] mr-[6px] ml-[47px] h-px shrink-0 bg-[#d4d4d4]" />
    <div className="mt-[12px] pl-[56px]"><Fit w={59}>Remove</Fit></div>
  </div>
);

export default function App() {
  return (
    <div className="relative h-[1800px] w-[2880px] overflow-hidden bg-[#323232] pt-[102px] pl-[24px] font-['Open_Sans','Noto_Sans',sans-serif] text-[16.500px] leading-[22px] tracking-[-0.2px] text-[#222]">
      <div className="h-[1593px] w-[2832px] bg-white pt-[152px] pl-[213px] shadow-[0_2px_10px_rgba(0,0,0,0.4)]">
        <h1 className="w-[1500px] origin-left scale-x-[1.1] font-['Inter',sans-serif] text-[128px] leading-[160px] font-light text-black [font-feature-settings:'cv11','ss03']">
          <Fit w={1291}>Normal Probability Plot</Fit>
        </h1>
      </div>
      <DataWindow />
      <ReportWindow />
      <ContextMenu />
      <div className="absolute top-[728px] left-[692px] flex h-[60px] w-[287px] flex-col items-start justify-center border-[1.5px] border-[#7f7f7f] bg-[#f1f2f9] pt-px pl-[10px] leading-[24px] text-[#6a6a6a]">
        <Fit w={266}>Displays or hides a Normal Quantile</Fit>
        <Fit w={212}>Plot, using a probability axis.</Fit>
      </div>
      <div className="absolute top-[1640px] left-[1310px] flex h-[60px] w-[258px] items-center justify-center rounded-[12px] bg-[rgba(128,128,128,0.88)] font-['Inter',sans-serif] text-[34.500px] leading-[44px] font-medium text-white">
        <Fit w={235}>Page 24 of 112</Fit>
      </div>
    </div>
  );
}
